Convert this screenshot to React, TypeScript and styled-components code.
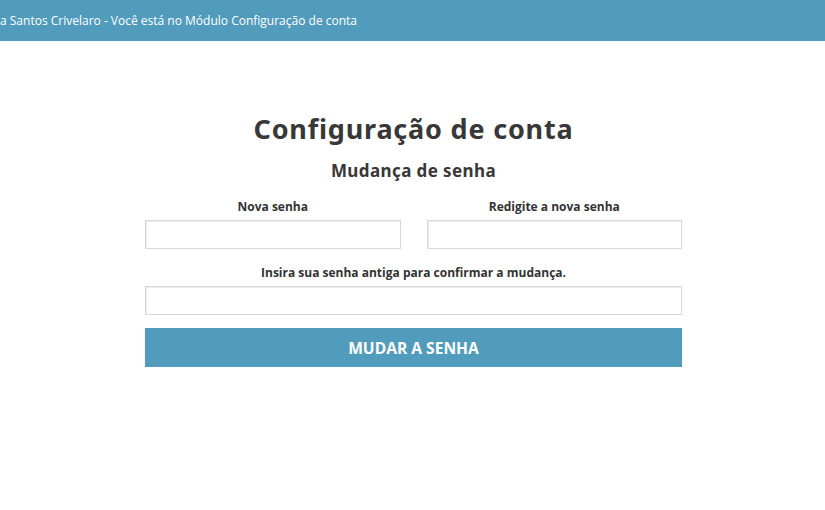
import React from "react";
import styled, { createGlobalStyle } from "styled-components";

const Global = createGlobalStyle`
  html, body { margin: 0; padding: 0; background: #fff; }
  body { font-family: "Open Sans", "Liberation Sans", sans-serif; color: #333; }
  * { box-sizing: border-box; }
`;

const TopBar = styled.header`
  height: 41px;
  background: #519bbd;
  color: #fff;
  font-family: "Open Sans", sans-serif;
  font-size: 12px;
  display: flex;
  align-items: center;
  padding: 0 0 1px 0;
  white-space: nowrap;
  overflow: hidden;
`;

const Main = styled.main`
  width: 539px;
  margin: 0 auto;
  padding: 70px 0 0 2px;
  display: flex;
  flex-direction: column;
  align-items: stretch;
`;

const Title = styled.h1`
  margin: 0;
  text-align: center;
  font-family: "Noto Sans", sans-serif;
  font-weight: 700;
  font-size: 27px;
  letter-spacing: 0.8px;
  line-height: 36px;
  color: #383838;
`;

const Subtitle = styled.h2`
  margin: 12px 0 0;
  text-align: center;
  font-family: "Noto Sans", sans-serif;
  font-weight: 700;
  font-size: 17px;
  letter-spacing: 0.4px;
  line-height: 24px;
  color: #383838;
`;

const Row = styled.div`
  display: grid;
  grid-template-columns: 1fr 1fr;
  column-gap: 26px;
  margin-top: 15px;
`;

const Field = styled.div<{ $top?: number }>`
  display: flex;
  flex-direction: column;
  margin-top: ${(p) => p.$top ?? 0}px;
`;

const Label = styled.label`
  text-align: center;
  font-family: "Open Sans", sans-serif;
  font-weight: 700;
  font-size: 12px;
  line-height: 18px;
  color: #333;
  margin-bottom: 4px;
`;

const Input = styled.input`
  height: 29px;
  width: 100%;
  border: 1px solid #d8d8d8;
  box-shadow: inset 1px 1px 0 #eee;
  background: #fff;
  outline: none;
  padding: 0 8px;
`;

const Button = styled.button`
  margin-top: 13px;
  height: 39px;
  width: 100%;
  border: none;
  background: #519bbd;
  color: #fff;
  font-family: "Open Sans", sans-serif;
  font-weight: 700;
  font-size: 15.6px;
  text-transform: uppercase;
  cursor: pointer;
`;

export default function App() {
  return (
    <>
      <Global />
      <TopBar>a Santos Crivelaro - Você está no Módulo Configuração de conta</TopBar>
      <Main>
        <Title>Configuração de conta</Title>
        <Subtitle>Mudança de senha</Subtitle>
        <Row>
          <Field>
            <Label>Nova senha</Label>
            <Input type="password" />
          </Field>
          <Field>
            <Label>Redigite a nova senha</Label>
            <Input type="password" />
          </Field>
        </Row>
        <Field $top={15}>
          <Label>Insira sua senha antiga para confirmar a mudança.</Label>
          <Input type="password" />
        </Field>
        <Button>Mudar a senha</Button>
      </Main>
    </>
  );
}
